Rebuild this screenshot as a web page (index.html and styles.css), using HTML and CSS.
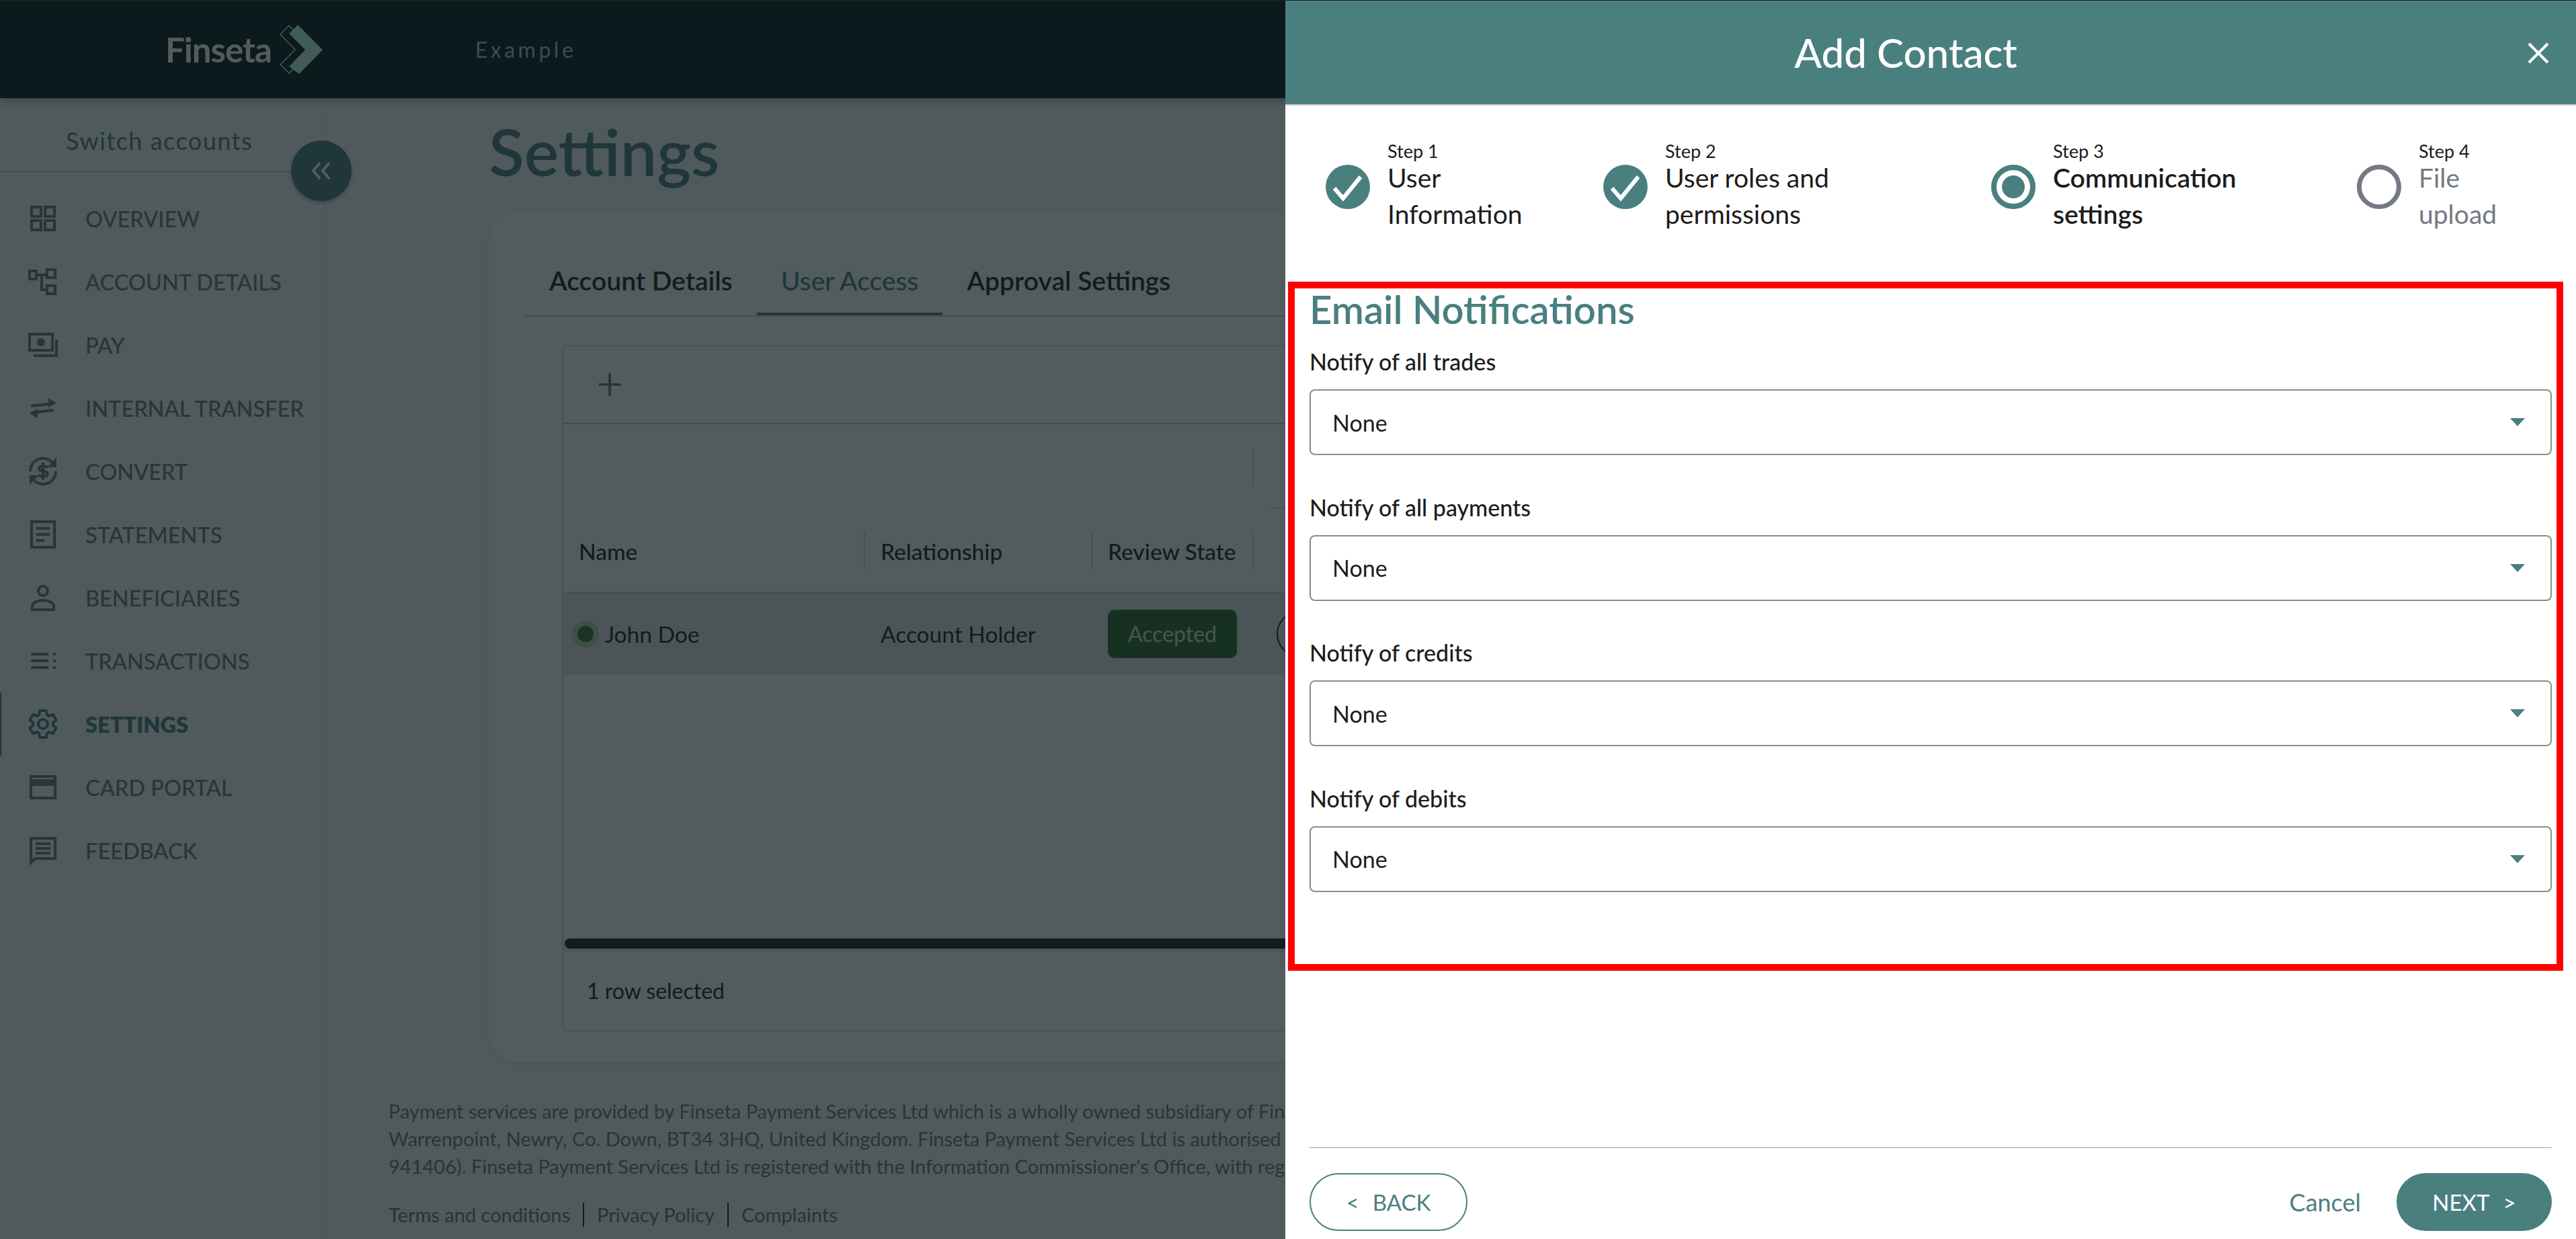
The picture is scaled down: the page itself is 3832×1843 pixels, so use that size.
FILE: index.html
```html
<!DOCTYPE html>
<html lang="en">
<head>
    <meta charset="UTF-8">
    <title>Finseta - Add Contact</title>
    <link rel="stylesheet" href="styles.css">
</head>
<body>
    <!-- page behind the drawer -->
    <header class="topbar">
        <div class="logo">
            <span class="logo-text">Finseta</span>
            <svg class="logo-mark" viewBox="0 0 64 73">
                <path class="logo-fill" d="M27 0L64 37L29 73L14 62L38 37L14 13Z"/>
                <path class="logo-line" d="M14 1L1 14L23 37L1 59L14 72L49 37Z"/>
            </svg>
        </div>
        <span class="account-name">Example</span>
    </header>

    <div class="layout">
        <aside class="sidebar">
            <div class="switch-accounts">Switch accounts</div>
            <button class="collapse-btn">
                <svg viewBox="0 0 32 28"><path d="M14 2L4 14L14 26M28 2L18 14L28 26"/></svg>
            </button>
            <nav class="nav">
                <a class="nav-item">
                    <svg viewBox="0 0 24 24"><path d="M3.5 3.5h7v7h-7zM13.5 3.5h7v7h-7zM3.5 13.5h7v7h-7zM13.5 13.5h7v7h-7z"/></svg>
                    OVERVIEW
                </a>
                <a class="nav-item">
                    <svg viewBox="0 0 24 24"><path d="M2 4h5v6H2zM15 3h6v6h-6zM15 15h6v6h-6zM7 7h8M11 7v11h4"/></svg>
                    ACCOUNT DETAILS
                </a>
                <a class="nav-item">
                    <svg viewBox="0 0 24 24"><path d="M2 4h17v12H2zM22 8v12H5"/><circle class="solid" cx="10.5" cy="10" r="3"/></svg>
                    PAY
                </a>
                <a class="nav-item">
                    <svg viewBox="0 0 24 24"><path d="M3 10.5L20 8.5M3 15.5L20 13.5"/><path class="solid" d="M16 4.500L22 8.200L16 11.500ZM8 12.500L2 16L8 19.500Z"/></svg>
                    INTERNAL TRANSFER
                </a>
                <a class="nav-item">
                    <svg viewBox="0 0 24 24"><path d="M2.500 12A9.500 9.500 0 0 1 19 5.500M21.500 12A9.500 9.500 0 0 1 5 18.500M15.500 9.500c-.5-1.500-6.500-2-6.500.5 0 3 6.500 1 6.500 4 0 2.500-6 2-6.500.5M12 5.500v13"/><path class="solid" d="M22 2v7h-7zM2 22v-7h7z"/></svg>
                    CONVERT
                </a>
                <a class="nav-item">
                    <svg viewBox="0 0 24 24"><path d="M3.500 2.500h17v19h-17zM7 7.500h10M7 12h10M7 16.500h6"/></svg>
                    STATEMENTS
                </a>
                <a class="nav-item">
                    <svg viewBox="0 0 24 24"><circle cx="12" cy="7" r="3.500"/><path d="M4 21v-2.500c0-2.800 4-4.500 8-4.500s8 1.700 8 4.500V21z"/></svg>
                    BENEFICIARIES
                </a>
                <a class="nav-item">
                    <svg viewBox="0 0 24 24"><path d="M3 7h13M3 12h13M3 17h13"/><path class="dots" d="M19.500 7h2M19.500 12h2M19.500 17h2"/></svg>
                    TRANSACTIONS
                </a>
                <a class="nav-item nav-active">
                    <svg viewBox="0 0 24 24"><path d="M19.430 12.980c.04-.32.07-.64.07-.98s-.03-.66-.07-.98l2.110-1.650c.19-.15.24-.42.12-.64l-2-3.460c-.12-.22-.39-.3-.61-.22l-2.490 1c-.52-.4-1.080-.73-1.690-.98l-.38-2.650C14.460 2.180 14.250 2 14 2h-4c-.25 0-.46.18-.49.42l-.38 2.650c-.61.25-1.170.59-1.690.98l-2.490-1c-.23-.09-.49 0-.61.22l-2 3.460c-.13.22-.07.49.12.64l2.110 1.650c-.04.32-.07.65-.07.98s.03.66.07.98l-2.110 1.650c-.19.15-.24.42-.12.64l2 3.460c.12.22.39.3.61.22l2.490-1c.52.4 1.080.73 1.690.98l.38 2.650c.03.24.24.42.49.42h4c.25 0 .46-.18.49-.42l.38-2.650c.61-.25 1.170-.59 1.690-.98l2.490 1c.23.09.49 0 .61-.22l2-3.460c.12-.22.07-.49-.12-.64l-2.110-1.650zM12 15.500c-1.930 0-3.500-1.570-3.500-3.500s1.570-3.500 3.500-3.500 3.500 1.570 3.500 3.500-1.570 3.500-3.500 3.500z"/></svg>
                    SETTINGS
                </a>
                <a class="nav-item">
                    <svg viewBox="0 0 24 24"><path d="M3 4h18v16H3z"/><path class="solid" d="M3 6h18v5H3z"/></svg>
                    CARD PORTAL
                </a>
                <a class="nav-item">
                    <svg viewBox="0 0 24 24"><path d="M3 3h18v15H6l-3 3z"/><path d="M6.500 7h11M6.500 10.500h11M6.500 14h11"/></svg>
                    FEEDBACK
                </a>
            </nav>
        </aside>

        <main class="main">
            <h1 class="page-title">Settings</h1>
            <section class="card">
                <div class="tabs">
                    <a class="tab">Account Details</a>
                    <a class="tab tab-active">User Access</a>
                    <a class="tab">Approval Settings</a>
                </div>
                <div class="grid-box">
                    <div class="grid-toolbar">
                        <svg class="plus-icon" viewBox="0 0 24 24"><path d="M12 3v18M3 12h18"/></svg>
                    </div>
                    <div class="grid-groups">
                        <div class="group-blank"></div>
                        <div class="group-line"></div>
                    </div>
                    <div class="grid-cols grid-head">
                        <div class="cell">Name</div>
                        <div class="cell">Relationship</div>
                        <div class="cell">Review State</div>
                        <div></div>
                    </div>
                    <div class="grid-cols grid-row">
                        <div class="cell name-cell"><span class="status-dot"></span>John Doe</div>
                        <div class="cell">Account Holder</div>
                        <div class="cell"><span class="badge">Accepted</span></div>
                        <div class="cell"><span class="row-action"></span></div>
                    </div>
                    <div class="grid-blank"></div>
                    <div class="grid-scroll"><div class="grid-thumb"></div></div>
                    <div class="grid-footer">1 row selected</div>
                </div>
            </section>
            <footer class="legal">
                <p>Payment services are provided by Finseta Payment Services Ltd which is a wholly owned subsidiary of Finseta<br>
                Warrenpoint, Newry, Co. Down, BT34 3HQ, United Kingdom. Finseta Payment Services Ltd is authorised<br>
                941406). Finseta Payment Services Ltd is registered with the Information Commissioner's Office, with registration</p>
                <div class="legal-links">
                    <a>Terms and conditions</a>
                    <a>Privacy Policy</a>
                    <a>Complaints</a>
                </div>
            </footer>
        </main>
    </div>

    <div class="backdrop"></div>

    <!-- drawer -->
    <aside class="drawer">
        <div class="drawer-head">
            <h2 class="drawer-title">Add Contact</h2>
            <svg class="drawer-close" viewBox="0 0 32 32"><path d="M2 2L30 30M30 2L2 30"/></svg>
        </div>

        <div class="stepper">
            <div class="step">
                <svg class="step-icon" viewBox="0 0 66 66"><circle class="step-done" cx="33" cy="33" r="33"/><path class="step-check" d="M13 35L26 50L52 18"/></svg>
                <div class="step-text"><small>Step 1</small><span>User<br>Information</span></div>
            </div>
            <div class="step">
                <svg class="step-icon" viewBox="0 0 66 66"><circle class="step-done" cx="33" cy="33" r="33"/><path class="step-check" d="M13 35L26 50L52 18"/></svg>
                <div class="step-text"><small>Step 2</small><span>User roles and<br>permissions</span></div>
            </div>
            <div class="step step-current">
                <svg class="step-icon" viewBox="0 0 66 66"><circle class="step-ring" cx="33" cy="33" r="29"/><circle class="step-done" cx="33" cy="33" r="17"/></svg>
                <div class="step-text"><small>Step 3</small><span>Communication<br>settings</span></div>
            </div>
            <div class="step step-todo">
                <svg class="step-icon" viewBox="0 0 66 66"><circle class="step-ring" cx="33" cy="33" r="29.500"/></svg>
                <div class="step-text"><small>Step 4</small><span>File<br>upload</span></div>
            </div>
        </div>

        <form class="notify-form">
            <h3 class="form-title">Email Notifications</h3>
            <div class="field">
                <label class="field-label">Notify of all trades</label>
                <div class="select"><span>None</span><i class="select-arrow"></i></div>
            </div>
            <div class="field">
                <label class="field-label">Notify of all payments</label>
                <div class="select"><span>None</span><i class="select-arrow"></i></div>
            </div>
            <div class="field">
                <label class="field-label">Notify of credits</label>
                <div class="select"><span>None</span><i class="select-arrow"></i></div>
            </div>
            <div class="field">
                <label class="field-label">Notify of debits</label>
                <div class="select"><span>None</span><i class="select-arrow"></i></div>
            </div>
        </form>

        <div class="drawer-foot">
            <button class="btn btn-outline"><span>&lt;</span>BACK</button>
            <a class="cancel-link">Cancel</a>
            <button class="btn btn-primary">NEXT<span>&gt;</span></button>
        </div>
    </aside>

    <!-- annotation over the form -->
    <div class="highlight"></div>
    <div class="window-edge"></div>
</body>
</html>
```

FILE: styles.css
```css
* {
    box-sizing: border-box;
}

html, body {
    margin: 0;
    height: 1843px;
    overflow: hidden;
}

body {
    position: relative;
    background: #fff;
    color: #1c1c1c;
    font-family: Lato, "Open Sans", sans-serif;
    font-size: 32px;
}

h1, h2, h3, p {
    margin: 0;
}

/* top bar */
.topbar {
    height: 146px;
    display: flex;
    align-items: center;
    padding-left: 246px;
    background: #06121a;
    box-shadow: 0 4px 12px rgba(0, 0, 0, 0.3);
    position: relative;
}

.logo {
    display: flex;
    align-items: center;
    gap: 12px;
}

.logo-text {
    color: #fff;
    font-size: 51px;
    font-weight: 700;
    letter-spacing: -1px;
}

.logo-mark {
    width: 64px;
    height: 73px;
}

.logo-fill {
    fill: #c2ffe8;
}

.logo-line {
    fill: none;
    stroke: #c2ffe8;
    stroke-width: 1.5;
}

.account-name {
    margin-left: 227px;
    color: #b5c7d0;
    font-size: 32px;
    letter-spacing: 4.500px;
}

/* sidebar */
.layout {
    display: flex;
    height: 1697px;
    background: #f8f8f8;
}

.sidebar {
    width: 485px;
    flex-shrink: 0;
    border-right: 2px solid #e6e8e8;
    position: relative;
}

.switch-accounts {
    height: 110px;
    padding: 17px 0 0 98px;
    display: flex;
    align-items: center;
    border-bottom: 2px solid #c8cfd0;
    color: #4a7f80;
    font-size: 36px;
    letter-spacing: 1.500px;
}

.collapse-btn {
    position: absolute;
    left: 433px;
    top: 63px;
    width: 90px;
    height: 90px;
    padding: 0;
    border: none;
    border-radius: 50%;
    background: #4a7f80;
    box-shadow: 0 3px 6px rgba(0, 0, 0, 0.3);
    display: flex;
    align-items: center;
    justify-content: center;
}

.collapse-btn svg {
    width: 32px;
    height: 30px;
    fill: none;
    stroke: #fff;
    stroke-width: 4;
}

.nav {
    padding-top: 22px;
}

.nav-item {
    height: 94px;
    padding-left: 40px;
    display: flex;
    align-items: center;
    gap: 39px;
    color: #6a787e;
    font-size: 32.500px;
    font-weight: 500;
}

.nav-item svg {
    width: 48px;
    height: 48px;
    flex-shrink: 0;
    fill: none;
    stroke: currentColor;
    stroke-width: 2;
}

.nav-item svg .solid {
    fill: currentColor;
    stroke: none;
}

.nav-item svg .dots {
    stroke-dasharray: 2 3;
}

.nav-active {
    color: #4a7f80;
    font-weight: 800;
    border-left: 2px solid #4a7f80;
    padding-left: 38px;
}

/* main column */
.main {
    flex: 1;
    padding-left: 242px;
    min-width: 0;
}

.page-title {
    padding-top: 31px;
    font-size: 97px;
    line-height: 96px;
    font-weight: 600;
    color: #4a7f80;
}

.card {
    margin-top: 43px;
    width: 2950px;
    height: 1264px;
    padding: 57px 54px 46px;
    border-radius: 40px;
    background: #ffffff;
    box-shadow: 0 2px 8px rgba(0, 0, 0, 0.1);
}

.tabs {
    display: flex;
    border-bottom: 2px solid #c8cfd0;
}

.tab {
    padding: 22px 36px 26px;
    line-height: 44px;
    font-size: 39px;
    font-weight: 600;
    border-bottom: 4px solid transparent;
}

.tab-active {
    color: #4a7f80;
    font-weight: 500;
    border-bottom-color: #4a7f80;
}

.grid-box {
    margin: 42px 0 0 55px;
    width: 2700px;
    height: 1021px;
    display: flex;
    flex-direction: column;
    border: 2px solid #d6dada;
    border-radius: 10px;
}

.grid-toolbar {
    height: 116px;
    padding-left: 47px;
    display: flex;
    align-items: center;
    border-bottom: 2px solid #c8cfd0;
}

.plus-icon {
    width: 44px;
    height: 44px;
    fill: none;
    stroke: #4a7f80;
    stroke-width: 2;
}

.grid-groups {
    height: 126px;
    display: flex;
}

.group-blank {
    width: 1027px;
    background: linear-gradient(#d6dada, #d6dada) right 36px / 2px 54px no-repeat;
}

.group-line {
    flex: 1;
    margin-left: 23px;
    border-bottom: 2px solid #d6dada;
}

.grid-cols {
    display: grid;
    grid-template-columns: 449px 338px 240px 1fr;
}

.grid-head {
    height: 125px;
    border-bottom: 2px solid #c8cfd0;
}

.grid-head .cell {
    background: linear-gradient(#d6dada, #d6dada) right center / 2px 54px no-repeat;
    font-weight: 500;
    padding-top: 3px;
}

.cell {
    padding-left: 23px;
    display: flex;
    align-items: center;
    font-size: 33.500px;
}

.grid-row {
    height: 121px;
    background: #e4e7e7;
    border-bottom: 2px solid #dde0e0;
}

.grid-row .cell {
    padding-top: 2px;
}

.name-cell {
    padding-left: 13px;
    gap: 9px;
}

.status-dot {
    width: 40px;
    height: 40px;
    border-radius: 50%;
    border: 8px solid #b8d4b4;
    background: #2f7a30;
}

.badge {
    width: 192px;
    height: 72px;
    display: flex;
    align-items: center;
    justify-content: center;
    border-radius: 10px;
    background: #2a6a2c;
    color: #d4e8d4;
    font-size: 32px;
}

.row-action {
    width: 68px;
    height: 68px;
    margin-left: 11px;
    border: 2px solid #1c1c1c;
    border-radius: 50%;
}

.grid-blank {
    flex: 1;
}

.grid-scroll {
    height: 19px;
    padding: 2px 2px;
    background: #f0f0f0;
}

.grid-thumb {
    height: 15px;
    border-radius: 8px;
    background: #1c1c1c;
}

.grid-footer {
    height: 119px;
    padding-left: 35px;
    display: flex;
    align-items: center;
    font-size: 32px;
    border-top: 2px solid #e6e8e8;
}

/* legal text */
.legal {
    margin: 52px 0 0 -149px;
    color: #6a787e;
    font-size: 29px;
    line-height: 41px;
    white-space: nowrap;
}

.legal-links {
    margin-top: 34px;
    display: flex;
    color: #4a7f80;
}

.legal-links a {
    height: 36px;
    line-height: 36px;
    padding: 0 19px;
    border-right: 2px solid #1c1c1c;
}

.legal-links a:first-child {
    padding-left: 0;
}

.legal-links a:last-child {
    border-right: none;
}

/* dim layer and drawer */
.backdrop {
    position: absolute;
    inset: 0;
    background: rgba(15, 28, 30, 0.72);
}

.drawer {
    position: absolute;
    top: 0;
    right: 0;
    bottom: 0;
    width: 1920px;
    display: flex;
    flex-direction: column;
    background: #fff;
}

.drawer-head {
    height: 157px;
    padding-right: 74px;
    display: flex;
    align-items: center;
    justify-content: center;
    background: #4a7f80;
    border-bottom: 2px solid #cccccc;
    position: relative;
}

.drawer-title {
    color: #fff;
    font-size: 60px;
    font-weight: 500;
}

.drawer-close {
    position: absolute;
    right: 40px;
    top: 63px;
    width: 32px;
    height: 32px;
    fill: none;
    stroke: #fff;
    stroke-width: 4;
}

.stepper {
    display: grid;
    grid-template-columns: 413px 577px 544px 1fr;
    padding: 53px 0 0 60px;
}

.step {
    display: flex;
    align-items: center;
    gap: 26px;
}

.step-icon {
    width: 66px;
    height: 66px;
    flex-shrink: 0;
}

.step-done {
    fill: #4a7f80;
}

.step-check {
    fill: none;
    stroke: #fff;
    stroke-width: 6;
}

.step-ring {
    fill: none;
    stroke: #4a7f80;
    stroke-width: 8;
}

.step-todo .step-ring {
    stroke: #737a82;
    stroke-width: 7;
}

.step-text small {
    display: block;
    font-size: 27px;
    line-height: 29px;
}

.step-text span {
    display: block;
    margin-top: -2px;
    font-size: 39px;
    line-height: 54px;
}

.step-current .step-text span {
    font-size: 39px;
    font-weight: 600;
}

.step-todo .step-text span {
    color: #737a82;
}

.notify-form {
    padding: 83px 36px 0;
}

.form-title {
    height: 64px;
    margin-bottom: 26px;
    color: #4a7f80;
    font-size: 58px;
    line-height: 64px;
    font-weight: 600;
}

.field {
    margin-bottom: 57.500px;
}

.field-label {
    display: block;
    height: 40px;
    margin-bottom: 21px;
    font-size: 34px;
    line-height: 40px;
    font-weight: 500;
}

.select {
    height: 98px;
    padding: 0 38px 0 32px;
    display: flex;
    align-items: center;
    justify-content: space-between;
    border: 2px solid #868e8e;
    border-radius: 8px;
    font-size: 34px;
}

.select-arrow {
    width: 0;
    height: 0;
    border-left: 11px solid transparent;
    border-right: 11px solid transparent;
    border-top: 12px solid #4a7f80;
}

.drawer-foot {
    margin: auto 36px 0;
    padding: 37px 0 12px;
    display: flex;
    align-items: center;
    border-top: 2px solid #c8c8c8;
}

.btn {
    height: 86px;
    display: flex;
    align-items: center;
    justify-content: center;
    gap: 20px;
    border-radius: 43px;
    font-family: inherit;
    font-size: 33px;
}

.btn-outline {
    width: 235px;
    background: #fff;
    color: #4a7f80;
    border: 2px solid #4a7f80;
}

.btn-primary {
    width: 231px;
    background: #4a7f80;
    color: #fff;
    border: none;
}

.cancel-link {
    margin: 0 53px 0 auto;
    color: #4a7f80;
    font-size: 36px;
}

/* red annotation box */
.highlight {
    position: absolute;
    left: 1916px;
    top: 419px;
    width: 1897px;
    height: 1025px;
    border: 10px solid #ff0000;
}

.window-edge {
    position: absolute;
    top: 0;
    left: 0;
    right: 0;
    height: 1px;
    background: #222;
}
```
